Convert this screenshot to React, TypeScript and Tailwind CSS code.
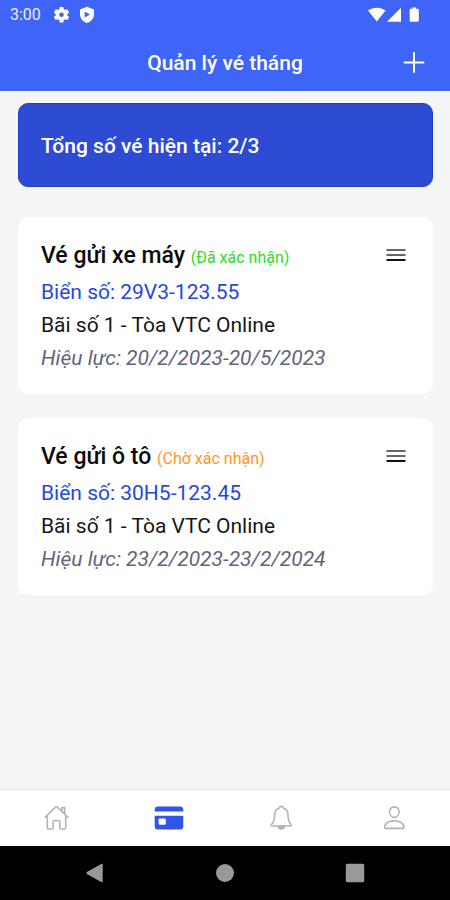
import type { ReactNode } from 'react'
import clsx from 'clsx'

type Ticket = {
  id: number
  name: string
  status: 'confirmed' | 'pending'
  plate: string
  place: string
  from: string
  to: string
}

const MAX_TICKETS = 3

const tickets: Ticket[] = [
  { id: 1, name: 'Vé gửi xe máy', status: 'confirmed', plate: '29V3-123.55', place: 'Bãi số 1 - Tòa VTC Online', from: '20/2/2023', to: '20/5/2023' },
  { id: 2, name: 'Vé gửi ô tô', status: 'pending', plate: '30H5-123.45', place: 'Bãi số 1 - Tòa VTC Online', from: '23/2/2023', to: '23/2/2024' },
]

// --- STATUS BAR ---
function StatusBar() {
  return (
    <div className="flex h-[30px] items-center justify-between pl-[10px] pr-[30px] text-white">
      <div className="flex items-center">
        <span className="w-[43px] text-base leading-5 opacity-90">3:00</span>
        <svg viewBox="1.500 2.500 21 21" className="size-[17px]" fill="currentColor" aria-hidden="true">
          <path fillRule="evenodd" d="M19.14 12.94c.04-.3.06-.61.06-.94 0-.32-.02-.64-.07-.94l2.03-1.58a.49.49 0 0 0 .12-.61l-1.92-3.32a.49.49 0 0 0-.59-.22l-2.39.96a7 7 0 0 0-1.62-.94l-.36-2.54a.48.48 0 0 0-.48-.41h-3.84a.48.48 0 0 0-.47.41l-.36 2.54c-.59.24-1.13.57-1.62.94l-2.39-.96a.48.48 0 0 0-.59.22L2.74 8.87a.48.48 0 0 0 .12.61l2.03 1.58a6 6 0 0 0-.02 1.88l-2.03 1.58a.49.49 0 0 0-.12.61l1.92 3.32c.12.22.37.29.59.22l2.39-.96c.5.38 1.03.7 1.62.94l.36 2.54c.05.24.24.41.48.41h3.84c.24 0 .44-.17.47-.41l.36-2.54a7 7 0 0 0 1.62-.94l2.39.96c.22.08.47 0 .59-.22l1.92-3.32a.48.48 0 0 0-.12-.61zM12 14.800a2.800 2.800 0 1 1 0-5.600 2.800 2.800 0 0 1 0 5.600z" />
        </svg>
        <svg viewBox="0 0 16 18" className="ml-[9px] h-[18px] w-4" fill="currentColor" aria-hidden="true">
          <path fillRule="evenodd" d="M8 .8 1 3.500v5c0 4 2.900 7.200 7 8.500 4.100-1.300 7-4.500 7-8.500v-5zM5.700 5.600 11 8.600 5.700 11.600z" />
        </svg>
      </div>
      <svg viewBox="0 0 52 16" className="h-4 w-[52px]" fill="currentColor" aria-hidden="true">
        <path d="M0 3.600C4.800-.3 12.800-.3 17.600 3.600L8.800 14.500z" />
        <path d="M33 .8v14H19z" />
        <path d="M44.500.4h3.600v1.300h1.500q1.200 0 1.200 1.200v10.700q0 1.200-1.200 1.200h-6.700q-1.200 0-1.200-1.200V2.900q0-1.200 1.200-1.200h1.600z" />
      </svg>
    </div>
  )
}

// --- TICKET CARD ---
function TicketCard({ ticket }: { ticket: Ticket }) {
  const confirmed = ticket.status === 'confirmed'

  return (
    <article className="rounded-[10px] bg-white px-[23px] pt-[21px] pb-[19px]">
      <div className="flex h-9 items-center justify-between">
        <h2 className="text-[23px] font-medium text-[#0b0b0b]">
          {ticket.name}{' '}
          <span className={clsx('text-base font-normal', confirmed ? 'text-[#2bdc2b]' : 'text-[#ff9526]')}>
            ({confirmed ? 'Đã xác nhận' : 'Chờ xác nhận'})
          </span>
        </h2>
        <button type="button" aria-label="Tùy chọn" className="flex h-8 items-center pr-1 pb-0.5">
          <svg viewBox="0 0 20 14" className="h-[14px] w-5" aria-hidden="true">
            <path d="M.5 2h19M.5 7h19" stroke="#666" strokeWidth="2" />
            <path d="M.5 12h19" stroke="#111" strokeWidth="2" />
          </svg>
        </button>
      </div>
      <div className="mt-0.5 text-[21px] leading-[33px] text-[#161616]">
        <p className="text-[#2348e0]">Biển số: {ticket.plate}</p>
        <p>{ticket.place}</p>
        <p className="italic text-[#63657a]">Hiệu lực: {ticket.from}-{ticket.to}</p>
      </div>
    </article>
  )
}

// --- BOTTOM TABS ---
function Tab({ label, active, children }: { label: string, active?: boolean, children: ReactNode }) {
  return (
    <a
      href="#"
      aria-label={label}
      aria-current={active ? 'page' : undefined}
      className={clsx('flex flex-1 items-center justify-center', active ? 'text-[#3154ea]' : 'text-[#b2b3bb]')}
    >
      {children}
    </a>
  )
}

function BottomTabs() {
  return (
    <nav className="flex h-[57px] border-t border-[#e6e6e6] bg-white">
      <Tab label="Trang chủ">
        <svg viewBox="0 0 28 28" className="size-7" fill="none" stroke="currentColor" strokeWidth="1.600" strokeLinejoin="round" strokeLinecap="round">
          <path d="M3 13.300 13.500 3.200q1-.9 2 0L26 13.300M5.300 11.300v12.400q0 1.300 1.300 1.300h3.300q1.300 0 1.300-1.300v-5.900q0-1.300 1.300-1.300h4q1.300 0 1.300 1.300v5.900q0 1.300 1.300 1.300h3.300q1.300 0 1.300-1.300V11.300M20 7.200V3.600h2.700v6.300" />
        </svg>
      </Tab>
      <Tab label="Vé tháng" active>
        <svg viewBox="0 0 30 24" className="h-6 w-[30px]" fill="currentColor">
          <path d="M3.500.5h23q2.500 0 2.800 2.500v2.500H.7V3Q1 .5 3.500.5z" />
          <path fillRule="evenodd" d="M.7 9.800h28.600V21q-.3 2.500-2.800 2.500h-23Q1 23.500.7 21zM5.800 12.500q-1.200 0-1.200 1.200v3.800q0 1.200 1.200 1.200h4.800q1.200 0 1.200-1.200v-3.800q0-1.200-1.200-1.200z" />
        </svg>
      </Tab>
      <Tab label="Thông báo">
        <svg viewBox="0 0 28 28" className="size-7" fill="none" stroke="currentColor" strokeWidth="1.600" strokeLinejoin="round">
          <path d="M12.500 3.900q0-1.500 1.800-1.500t1.800 1.500c3.500.9 4.900 3.600 4.900 7.100 0 5.500 1.100 7.300 2.900 9.100.8.900.3 1.900-.7 1.900H5.400c-1 0-1.500-1-.7-1.900 1.800-1.800 2.900-3.600 2.900-9.100 0-3.500 1.400-6.200 4.900-7.100z" />
          <path d="M11.300 22.400c.4 3.300 5.600 3.300 6 0z" fill="currentColor" />
        </svg>
      </Tab>
      <Tab label="Tài khoản">
        <svg viewBox="0 0 28 28" className="size-7" fill="none" stroke="currentColor" strokeWidth="1.600" strokeLinejoin="round">
          <path d="M14.300 2.900c2.900 0 5 2.200 4.800 5.100-.2 3-2.300 5.400-4.800 5.400S9.700 11 9.500 8c-.2-2.900 1.900-5.100 4.800-5.100zM14.300 16.900c-5.200 0-9 2.400-9.700 6-.1.900.3 1.500 1.200 1.500h17c.9 0 1.300-.6 1.200-1.500-.7-3.600-4.500-6-9.700-6z" />
        </svg>
      </Tab>
    </nav>
  )
}

// --- ANDROID NAVIGATION BUTTONS ---
function SystemBar() {
  return (
    <div className="flex h-[54px] items-center justify-between bg-black px-[85px] text-[#999]">
      <button type="button" aria-label="Quay lại">
        <svg viewBox="0 0 20 20" className="size-5" fill="currentColor"><path d="M17.700 1.300v17.400q0 1-1 .5L1.800 11q-1-1 0-2L16.700.8q1-.5 1 .5z" /></svg>
      </button>
      <button type="button" aria-label="Màn hình chính">
        <svg viewBox="0 0 20 20" className="size-5" fill="currentColor"><circle cx="10" cy="10" r="9" /></svg>
      </button>
      <button type="button" aria-label="Ứng dụng gần đây">
        <svg viewBox="0 0 20 20" className="size-5" fill="currentColor"><rect x=".8" y=".8" width="18.400" height="18.400" rx="1.500" /></svg>
      </button>
    </div>
  )
}

export default function App() {
  return (
    <div className="flex min-h-screen flex-col bg-[#f5f5f5] font-[Roboto,'Noto_Sans',sans-serif]">
      <header className="border-b border-white bg-[#3e64f8]">
        <StatusBar />
        <div className="grid h-[61px] grid-cols-[1fr_auto_1fr] items-center px-6 pt-1.5 text-white">
          <h1 className="col-start-2 text-[21px] font-medium">Quản lý vé tháng</h1>
          <button type="button" aria-label="Thêm vé" className="justify-self-end">
            <svg viewBox="0 0 24 24" className="size-6" fill="none" stroke="currentColor" strokeWidth="2" strokeLinecap="round" aria-hidden="true">
              <path d="M12 .9v19M2.500 10.400h19" />
            </svg>
          </button>
        </div>
      </header>

      <main className="flex-1 pt-[11px] pr-[17px] pb-6 pl-[18px]">
        <section className="flex h-[84px] items-center rounded-[10px] border border-[#1d3fcf] bg-[#2e4bd3] px-[22px] pt-1">
          <p className="text-[21px] font-medium text-white">Tổng số vé hiện tại: {tickets.length}/{MAX_TICKETS}</p>
        </section>
        <div className="mt-[30px] flex flex-col gap-6">
          {tickets.map(t => <TicketCard key={t.id} ticket={t} />)}
        </div>
      </main>

      <BottomTabs />
      <SystemBar />
    </div>
  )
}
